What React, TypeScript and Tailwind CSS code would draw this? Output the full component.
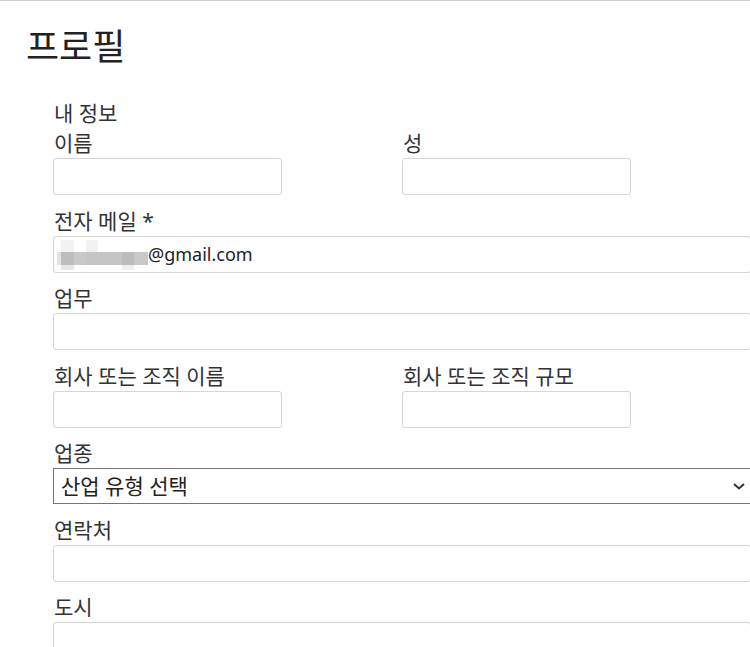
import React from "react";

const font = { fontFamily: '"Noto Sans", "Noto Sans CJK KR", sans-serif' };

function Label({ children }: { children: React.ReactNode }) {
  return (
    <div className="text-[21px] leading-[26px] text-[#333333] mb-[2px] pl-[1px]">{children}</div>
  );
}

function Field({ label, half, children }: { label: string; half?: boolean; children?: React.ReactNode }) {
  return (
    <div className="mb-[12.5px]">
      <Label>{label}</Label>
      <div
        className={`${half ? "w-[229px]" : "w-full"} h-[37px] border border-[#d6d6d6] rounded-[3px] bg-white flex items-center`}
      >
        {children}
      </div>
    </div>
  );
}

function BlurredName() {
  return (
    <div className="flex flex-col w-[91px] ml-[3px] mt-[2px] shrink-0">
      <div className="flex h-[12px]">
        <div className="w-[4px]" />
        <div className="w-[13px] bg-[#f2f2f2]" />
        <div className="w-[12px]" />
        <div className="w-[12px] bg-[#f2f2f2]" />
      </div>
      <div className="flex h-[13px]">
        <div className="w-[4px] bg-[#e2e2e2]" />
        <div className="w-[13px] bg-[#bdbdbd]" />
        <div className="w-[12px] bg-[#c9c9c9]" />
        <div className="w-[36px] bg-[#c5c5c5]" />
        <div className="w-[12px] bg-[#bcbcbc]" />
        <div className="w-[14px] bg-[#c9c9c9]" />
      </div>
      <div className="flex h-[5px]">
        <div className="w-[4px]" />
        <div className="w-[13px] bg-[#e6e6e6]" />
        <div className="w-[48px]" />
        <div className="w-[12px] bg-[#efefef]" />
      </div>
    </div>
  );
}

export default function App() {
  return (
    <div className="w-[750px] h-[647px] overflow-hidden bg-white border-t border-[#d0d0d0]" style={font}>
      <h1 className="pl-[26px] pt-[24px] text-[36px] leading-[44px] text-[#222222] font-normal">프로필</h1>
      <div className="ml-[53px] w-[698px] mt-[31px]">
        <div className="text-[21px] leading-[26px] text-[#333333] mb-[4px] pl-[1px]">내 정보</div>
        <div className="grid grid-cols-2">
          <Field label="이름" half />
          <Field label="성" half />
        </div>
        <Field label="전자 메일 *">
          <BlurredName />
          <span className="text-[18px] text-[#222222] leading-[24px]">@gmail.com</span>
        </Field>
        <Field label="업무" />
        <div className="grid grid-cols-2">
          <Field label="회사 또는 조직 이름" half />
          <Field label="회사 또는 조직 규모" half />
        </div>
        <div className="mb-[12.5px]">
          <Label>업종</Label>
          <div className="w-full h-[36px] border border-[#767676] bg-white flex items-center justify-between pl-[7px]">
            <span className="text-[21px] leading-[26px] text-[#222222]">산업 유형 선택</span>
            <svg className="mr-[4px]" width="14" height="10" viewBox="0 0 14 10">
              <path d="M2 3 L7 7.5 L12 3" fill="none" stroke="#333" strokeWidth="2" />
            </svg>
          </div>
        </div>
        <Field label="연락처" />
        <Field label="도시" />
      </div>
    </div>
  );
}
